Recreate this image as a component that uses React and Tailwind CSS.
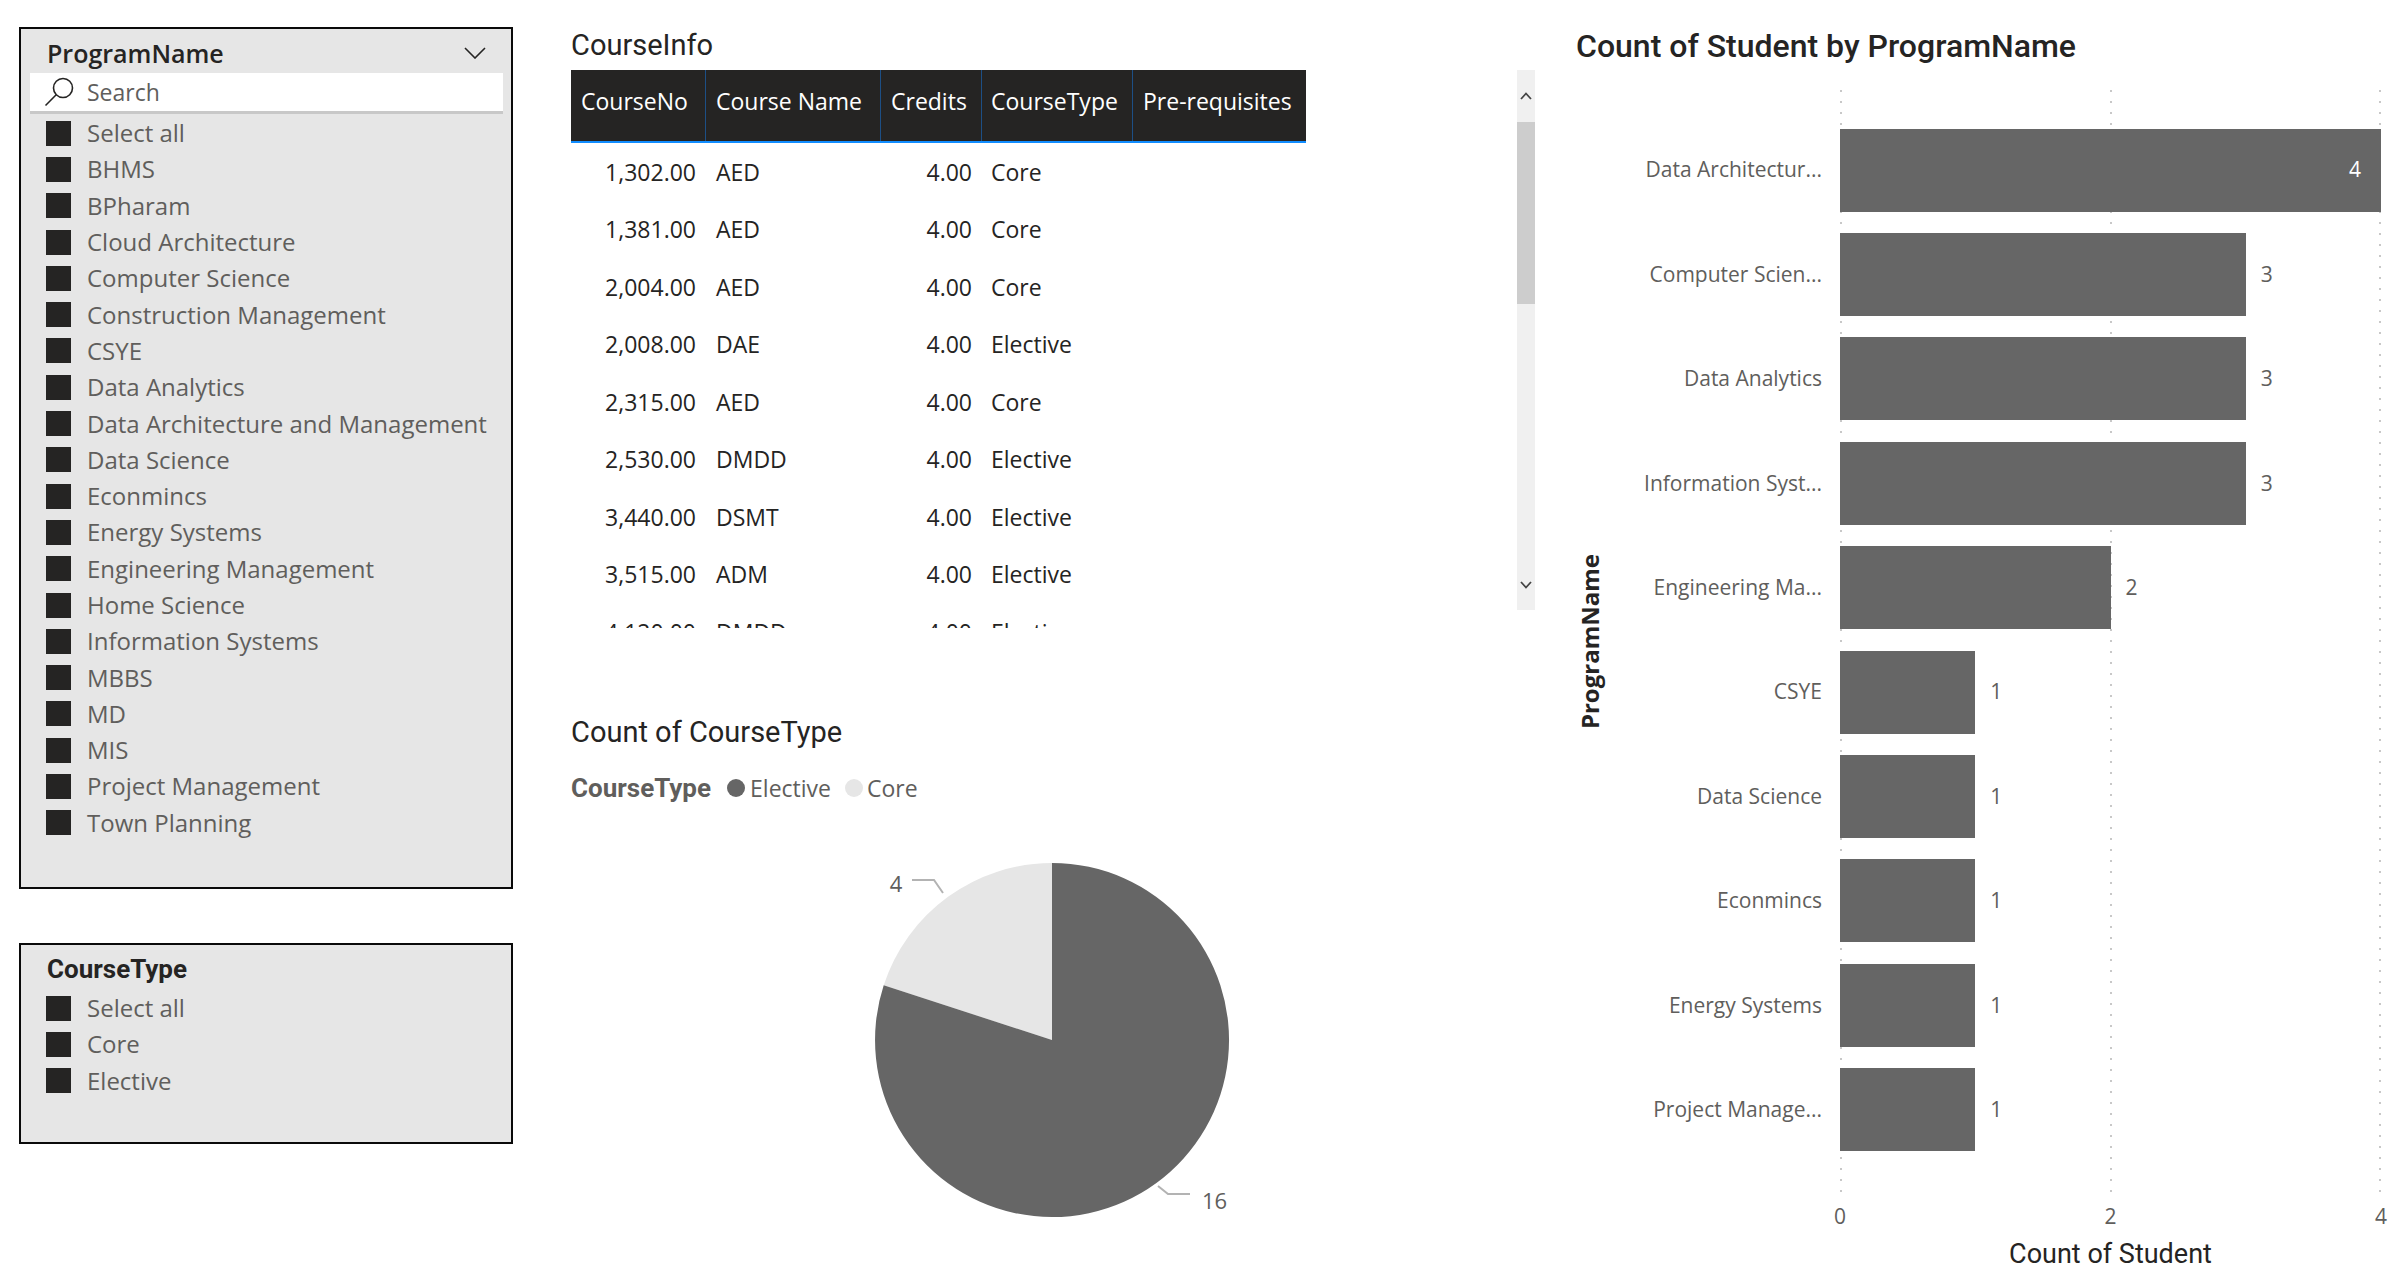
import React from "react";

const programs = [
  "Select all",
  "BHMS",
  "BPharam",
  "Cloud Architecture",
  "Computer Science",
  "Construction Management",
  "CSYE",
  "Data Analytics",
  "Data Architecture and Management",
  "Data Science",
  "Econmincs",
  "Energy Systems",
  "Engineering Management",
  "Home Science",
  "Information Systems",
  "MBBS",
  "MD",
  "MIS",
  "Project Management",
  "Town Planning",
];

const courses = [
  ["1,302.00", "AED", "4.00", "Core"],
  ["1,381.00", "AED", "4.00", "Core"],
  ["2,004.00", "AED", "4.00", "Core"],
  ["2,008.00", "DAE", "4.00", "Elective"],
  ["2,315.00", "AED", "4.00", "Core"],
  ["2,530.00", "DMDD", "4.00", "Elective"],
  ["3,440.00", "DSMT", "4.00", "Elective"],
  ["3,515.00", "ADM", "4.00", "Elective"],
  ["4,120.00", "DMDD", "4.00", "Elective"],
];

const students = [
  ["Data Architectur...", 4],
  ["Computer Scien...", 3],
  ["Data Analytics", 3],
  ["Information Syst...", 3],
  ["Engineering Ma...", 2],
  ["CSYE", 1],
  ["Data Science", 1],
  ["Econmincs", 1],
  ["Energy Systems", 1],
  ["Project Manage...", 1],
];

const SlicerItem = ({ label }) => (
  <div className="h-[36.3px] flex items-center pl-[25px]">
    <span className="w-[25px] h-[25px] bg-[#252423] shrink-0" />
    <span className="ml-[16px] text-[24px] leading-[30px] text-[#605E5C] whitespace-nowrap">
      {label}
    </span>
  </div>
);

const Chevron = ({ up }) => (
  <svg width="12" height="8" viewBox="0 0 12 8">
    <polyline
      points={up ? "1,7 6,1.5 11,7" : "1,1 6,6.5 11,1"}
      fill="none"
      stroke="#444"
      strokeWidth="1.8"
    />
  </svg>
);

const Scrollbar = () => (
  <div className="w-[18px] h-[540px] bg-[#F0F0F0] flex flex-col">
    <div className="h-[52px] flex items-center justify-center">
      <Chevron up />
    </div>
    <div className="h-[182px] bg-[#CDCDCD]" />
    <div className="flex-1" />
    <div className="h-[50px] flex items-center justify-center">
      <Chevron />
    </div>
  </div>
);

const App = () => {
  return (
    <div className="w-[2394px] h-[1288px] bg-white flex overflow-hidden font-['Open_Sans',sans-serif] text-[#252423]">
      {/* Slicers */}
      <div className="w-[571px] pl-[19px] pt-[27px] shrink-0">
        <div className="w-[494px] h-[862px] border-2 border-[#0a0a0a] bg-[#E6E6E6]">
          <div className="pt-[9px] pl-[26px] pr-[25px] flex items-center justify-between">
            <span className="text-[25px] leading-[30px] font-semibold text-[#252423]">
              ProgramName
            </span>
            <svg width="22" height="12" viewBox="0 0 22 12">
              <polyline points="1,1 11,11 21,1" fill="none" stroke="#252423" strokeWidth="1.6" />
            </svg>
          </div>
          <div className="mt-[5px] ml-[9px] mr-[8px] h-[41px] bg-white border-b-[3px] border-[#C8C8C8] flex items-center">
            <svg className="ml-[13px]" width="32" height="32" viewBox="0 0 32 32">
              <circle cx="20" cy="12" r="9.5" fill="none" stroke="#252423" strokeWidth="1.6" />
              <line x1="13.2" y1="18.8" x2="2.5" y2="29.5" stroke="#252423" strokeWidth="1.6" />
            </svg>
            <span className="ml-[12px] text-[23px] leading-[30px] text-[#605E5C]">Search</span>
          </div>
          <div className="mt-[1px]">
            {programs.map((p) => (
              <SlicerItem key={p} label={p} />
            ))}
          </div>
        </div>

        <div className="mt-[54px] w-[494px] h-[201px] border-2 border-[#0a0a0a] bg-[#E6E6E6]">
          <div className="pt-[9px] pl-[26px] text-[26px] leading-[30px] font-bold font-['Roboto',sans-serif] text-[#252423]">
            CourseType
          </div>
          <div className="mt-[6px]">
            {["Select all", "Core", "Elective"].map((p) => (
              <SlicerItem key={p} label={p} />
            ))}
          </div>
        </div>
      </div>

      {/* Table + pie */}
      <div className="w-[964px] shrink-0 flex flex-col">
        <div className="pt-[30px] h-[70px] text-[29px] leading-[30px] font-['Roboto',sans-serif]">
          CourseInfo
        </div>
        <div className="flex items-start">
          <div className="w-[735px]">
            <div className="grid grid-cols-[135px_175px_101px_151px_173px] h-[73px] bg-[#252423] border-b-2 border-[#118DFF] text-white text-[23px] leading-[28px]">
              <div className="pt-[17px] px-[10px] border-r border-[#1d4f85]">CourseNo</div>
              <div className="pt-[17px] px-[10px] border-r border-[#1d4f85]">Course Name</div>
              <div className="pt-[17px] px-[10px] border-r border-[#1d4f85]">Credits</div>
              <div className="pt-[17px] px-[9px] border-r border-[#1d4f85]">CourseType</div>
              <div className="pt-[17px] px-[10px] whitespace-nowrap">Pre-requisites</div>
            </div>
            <div className="h-[485px] overflow-hidden">
              {courses.map((c, i) => (
                <div
                  key={i}
                  className="grid grid-cols-[135px_175px_101px_151px_173px] h-[57.5px] items-center text-[23px] leading-[30px] text-[#252423]"
                >
                  <div className="pr-[10px] text-right">{c[0]}</div>
                  <div className="px-[10px]">{c[1]}</div>
                  <div className="pr-[10px] text-right">{c[2]}</div>
                  <div className="px-[9px]">{c[3]}</div>
                  <div />
                </div>
              ))}
            </div>
          </div>
          <div className="ml-auto">
            <Scrollbar />
          </div>
        </div>

        <div className="mt-[89px] text-[29px] leading-[30px] font-['Roboto',sans-serif]">
          Count of CourseType
        </div>
        <div className="mt-[26px] flex items-center h-[30px] text-[23px] text-[#605E5C]">
          <span className="font-bold text-[26px] font-['Roboto',sans-serif]">CourseType</span>
          <span className="ml-[16px] w-[18px] h-[18px] rounded-full bg-[#666666]" />
          <span className="ml-[5px]">Elective</span>
          <span className="ml-[14px] w-[18px] h-[18px] rounded-full bg-[#E6E6E6]" />
          <span className="ml-[4px]">Core</span>
        </div>
        <svg className="mt-[36px] ml-[285px]" width="400" height="400" viewBox="0 0 400 400">
          <path d="M196,201 L196,24 A177,177 0 0 0 27.7,146.3 Z" fill="#E6E6E6" />
          <path d="M196,201 L27.7,146.3 A177,177 0 1 0 196,24 Z" fill="#666666" />
          <polyline points="56,41 78,41 87,54" fill="none" stroke="#B3B3B3" strokeWidth="2" />
          <text x="40" y="44" fontSize="22" fill="#605E5C" textAnchor="middle" dominantBaseline="central">
            4
          </text>
          <polyline points="302,347 312,355 334,355" fill="none" stroke="#B3B3B3" strokeWidth="2" />
          <text x="346" y="361" fontSize="22" fill="#605E5C" dominantBaseline="central">
            16
          </text>
        </svg>
      </div>

      {/* Bar chart */}
      <div className="flex-1 pl-[41px] flex flex-col">
        <div className="pt-[31px] text-[32px] leading-[30px] font-medium font-['Roboto',sans-serif] whitespace-nowrap">
          Count of Student by ProgramName
        </div>
        <div className="mt-[29px] flex h-[1103px]">
          <div className="w-[28px] flex items-center justify-center">
            <span className="[writing-mode:vertical-rl] rotate-180 text-[24px] font-bold whitespace-nowrap text-[#252423]">
              ProgramName
            </span>
          </div>
          <div className="w-[236px] pt-[28px] pr-[18px]">
            {students.map(([name]) => (
              <div key={name} className="h-[104.4px] flex items-center justify-end text-[21px] text-[#605E5C] whitespace-nowrap">
                {name}
              </div>
            ))}
          </div>
          <div className="w-[541px] relative">
            <svg className="absolute inset-0" width="541" height="1103">
              {[1, 271, 540].map((x) => (
                <line key={x} x1={x} y1="0" x2={x} y2="1103" stroke="#C8C8C8" strokeWidth="2" strokeDasharray="2 9" />
              ))}
            </svg>
            <div className="relative pt-[28px]">
              {students.map(([name, v]) => (
                <div key={name} className="h-[104.4px] flex items-center">
                  {v === 4 ? (
                    <div className="h-[83px] w-[541px] bg-[#666666] flex items-center justify-end pr-[20px] text-[21px] text-white">
                      4
                    </div>
                  ) : (
                    <>
                      <div className="h-[83px] bg-[#666666]" style={{ width: v * 135.25 }} />
                      <span className="ml-[15px] text-[21px] text-[#605E5C]">{v}</span>
                    </>
                  )}
                </div>
              ))}
            </div>
          </div>
        </div>
        <div className="mt-[8px] ml-[244px] w-[581px] h-[30px] flex justify-between text-[21px] leading-[30px] text-[#605E5C]">
          <span className="w-[40px] text-center">0</span>
          <span className="w-[40px] text-center">2</span>
          <span className="w-[40px] text-center">4</span>
        </div>
        <div className="mt-[8px] ml-[244px] w-[581px] text-center text-[27px] leading-[30px] font-['Roboto',sans-serif] text-[#252423]">
          Count of Student
        </div>
      </div>
    </div>
  );
};

export default App;
